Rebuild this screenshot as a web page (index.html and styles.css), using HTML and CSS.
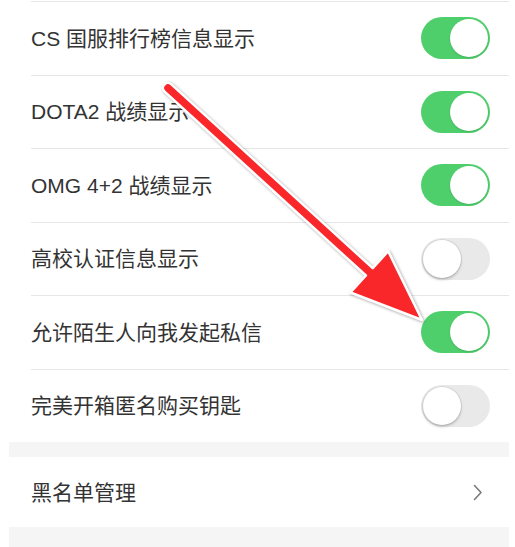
FILE: index.html
```html
<!DOCTYPE html>
<html lang="zh-CN">
<head>
<meta charset="utf-8">
<title>设置</title>
<link rel="stylesheet" href="styles.css">
</head>
<body>
<div class="page">
  <div class="top-line"></div>
  <section class="group">
    <div class="row"><div class="cell"><span class="label">CS 国服排行榜信息显示</span><span class="switch on"></span></div></div>
    <div class="row"><div class="cell"><span class="label">DOTA2 战绩显示</span><span class="switch on"></span></div></div>
    <div class="row"><div class="cell"><span class="label">OMG 4+2 战绩显示</span><span class="switch on"></span></div></div>
    <div class="row"><div class="cell"><span class="label">高校认证信息显示</span><span class="switch"></span></div></div>
    <div class="row"><div class="cell"><span class="label">允许陌生人向我发起私信</span><span class="switch on"></span></div></div>
    <div class="row"><div class="cell"><span class="label">完美开箱匿名购买钥匙</span><span class="switch"></span></div></div>
  </section>
  <div class="gap"></div>
  <section class="group">
    <div class="row short"><div class="cell link"><span class="label">黑名单管理</span>
      <svg class="chevron" width="10" height="17" viewBox="0 0 10 17"><polyline points="1.5,1.5 8,8.5 1.5,15.5" fill="none" stroke="#7a7a7a" stroke-width="1.6" stroke-linecap="round" stroke-linejoin="round"/></svg>
    </div></div>
  </section>
  <div class="bottom"></div>
</div>
<svg class="arrow" width="515" height="547" viewBox="0 0 515 547">
  <path d="M 171.4 84.3 L 372.7 268.1 L 388.2 251.1 L 422 320 L 350.4 292.5 L 365.9 275.5 L 164.6 91.7 A 5 5 0 0 1 171.4 84.3 Z" fill="#f9262a" stroke="#ffffff" stroke-width="2.5" stroke-linejoin="round"/>
</svg>
</body>
</html>
```

FILE: styles.css
```css
html, body {
  margin: 0;
  padding: 0;
  background: #ffffff;
}
body {
  position: relative;
  width: 515px;
  height: 547px;
  overflow: hidden;
  font-family: "Liberation Sans", "Noto Sans CJK SC", sans-serif;
  color: #333333;
}
.page {
  margin-left: 9px;
  width: 500px;
}
.top-line {
  margin: 1px 0 0 22px;
  height: 1px;
  background: #e6e6e6;
}
.group {
  background: #ffffff;
}
.row {
  padding-left: 22px;
}
.cell {
  height: 72.5px;
  border-bottom: 1px solid #e6e6e6;
  display: flex;
  align-items: center;
  justify-content: space-between;
  padding-right: 19px;
}
.row:last-child .cell {
  border-bottom: none;
}
.row.short .cell {
  height: 70px;
}
.cell.link {
  padding-right: 26px;
}
.label {
  font-size: 21px;
  line-height: 1;
  color: #333333;
}
.switch {
  position: relative;
  width: 69px;
  height: 42px;
  border-radius: 21px;
  background: #e9e9e9;
  box-sizing: border-box;
}
.switch::after {
  content: "";
  position: absolute;
  top: 2px;
  left: 2px;
  width: 38px;
  height: 38px;
  border-radius: 50%;
  background: #ffffff;
  box-shadow: 0 0 0 1px rgba(0,0,0,0.08), 0 2px 3px rgba(0,0,0,0.18);
}
.switch.on {
  background: #4fcf6c;
}
.switch.on::after {
  left: 29px;
  box-shadow: 0 1px 2px rgba(0,0,0,0.15);
}
.gap {
  height: 15px;
  background: #f5f5f5;
}
.bottom {
  height: 30px;
  background: #f5f5f5;
}
.chevron {
  display: block;
}
.arrow {
  position: absolute;
  top: 0;
  left: 0;
  pointer-events: none;
  filter: drop-shadow(1px 1px 1.5px rgba(0,0,0,0.35));
}
```
